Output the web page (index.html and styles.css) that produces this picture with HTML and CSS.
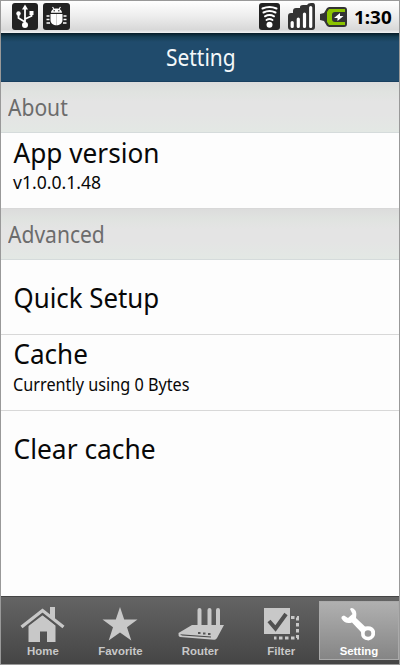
FILE: index.html
```html
<!DOCTYPE html>
<html lang="en">
<head>
<meta charset="utf-8">
<title>Setting</title>
<link rel="stylesheet" href="styles.css">
</head>
<body>
<div class="phone">
  <header class="status">
    <svg class="usb" width="26" height="27" viewBox="0 0 26 27"><rect width="26" height="27" rx="3" fill="#222"/><g fill="none" stroke="#fff" stroke-width="1.8"><path d="M13 5v17M13 19L6.500 15V11M13 16l6.500-3V10"/></g><path d="M13 1.500l3 5h-6z" fill="#fff"/><circle cx="13" cy="22" r="3" fill="#fff"/><circle cx="6.500" cy="10.500" r="2.200" fill="#fff"/><rect x="17.500" y="8" width="4" height="4" fill="#fff"/></svg>
    <svg class="bug" width="27" height="27" viewBox="0 0 27 27"><rect width="27" height="27" rx="3" fill="#222"/><path d="M8 9.800C8 4 19 4 19 9.800zM7.500 11h12v6c0 7-12 7-12 0z" fill="#fff"/><path d="M9.500 4l1.500 2M17.500 4L16 6" stroke="#fff" stroke-width="1.200"/><path d="M3.500 13h3M3.500 16.500h3M3.500 20h3.500M20.500 13h3M20.500 16.500h3M20 20h3.500" stroke="#fff" stroke-width="1.700"/><path d="M13.500 11v11" stroke="#ccc"/><path d="M10.500 7.800h1.500M15 7.800h1.500" stroke="#222"/></svg>
    <svg class="wifi" width="21" height="27" viewBox="0 0 21 27"><rect width="21" height="27" rx="3" fill="#222"/><g fill="none" stroke="#fff" stroke-width="2" stroke-linecap="round"><path d="M3.500 5.500Q10.500 2.500 17.500 5.500M4.500 9.500Q10.500 6.500 16.500 9.500M6 13.300Q10.500 10.800 15 13.300M7.500 17Q10.500 15 13.500 17"/></g><circle cx="10.500" cy="21.800" r="3" fill="#fff"/></svg>
    <svg class="signal" width="27" height="27" viewBox="0 0 27 27"><path d="M0 24V13Q0 10 3 10H5V8Q5 5 8 5H12V4Q12 2 15 2H19Q20 0 23 0H25Q27 0 27 3V24Q27 27 24 27H3Q0 27 0 24z" fill="#333"/><path d="M4.200 23.500v-4M10.300 23.500V16M16.500 23.500V11M22.700 23.500V4.500" stroke="#fff" stroke-width="3.200" stroke-linecap="round"/></svg>
    <svg class="battery" width="27" height="20" viewBox="0 0 27 20"><path d="M0 7l4-1 3-5 2-1h15q3 0 3 3v14q0 3-3 3H9l-2-1-3-5-4-1z" fill="#333"/><path d="M9 2h16v3H15q-3 0-3 3v4q0 3 3 3h10v3H9l-2-3V5z" fill="#8bc400"/><path d="M14 11l6-5v3h3.500l-6 5v-3z" fill="#fff"/></svg>
    <span class="clock">1:30</span>
  </header>
  <div class="titlebar"><span class="t-title">Setting</span></div>
  <main>
    <h2 class="about"><span class="t-about">About</span></h2>
    <section class="row"><span class="t-main t-app">App version</span><span class="t-sub t-ver">v1.0.0.1.48</span></section>
    <h2><span class="t-adv">Advanced</span></h2>
    <section class="row single"><span class="t-main t-quick">Quick Setup</span></section>
    <section class="row"><span class="t-main t-cache">Cache</span><span class="t-sub t-use">Currently using 0 Bytes</span></section>
    <section class="row single last"><span class="t-main t-clear">Clear cache</span></section>
  </main>
  <nav>
    <div class="tab"><svg width="46" height="36" viewBox="0 0 46 36"><path d="M30 1h5v13l-5-4zM8.500 19.500L22 8.500l13.500 11V36H27V25.500h-7V36H8.500z"/><path d="M1.500 22.500L22.500 6.500l21 16" fill="none" stroke="#555" stroke-width="4.500"/><path d="M1.500 21L22.500 4.500l21 16.500" fill="none" stroke="#c8c8c8" stroke-width="3.300"/></svg><span>Home</span></div>
    <div class="tab"><svg width="36" height="36" viewBox="0 0 36 36"><path d="M18 1l4.200 12.500H35.500L25 21.300 29.300 34.500 18 26.500 6.700 34.500 11 21.300.5 13.500h13.300z"/></svg><span>Favorite</span></div>
    <div class="tab"><svg width="48" height="36" viewBox="0 0 48 36"><path d="M15 19h32l-7 13q-1 2-3 1.700L3 31q-2-1-1.500-4z"/><path d="M22.500 21V4M32.500 21V4M41 21V4" stroke="#c8c8c8" stroke-width="4" stroke-linecap="round"/><path d="M3 28.200l31 2.300v1L5 29.500z" fill="#484848"/><path d="M21 27h2.500M26 27.500h2.500M31 28h2.500" stroke="#555" stroke-width="1.800"/></svg><span>Router</span></div>
    <div class="tab"><svg width="36" height="36" viewBox="0 0 36 36"><path d="M0 2h26v26H0z"/><path d="M5 15l6.500 7.500L22 8" fill="none" stroke="#505050" stroke-width="4"/><path d="M27 11.500h6.500V32H10" fill="none" stroke="#c8c8c8" stroke-width="3" stroke-dasharray="3.500 2.500"/></svg><span>Filter</span></div>
    <div class="tab active"><svg width="36" height="36" viewBox="0 0 36 36"><path d="M9 3Q11 .5 14 4Q16 6 15 12L24 20.500Q32 19 34 25Q35 33 27.500 34.500Q19.500 34 20 26L11 16.500Q4 18.500.5 12.500Q0 10 3 9.500L7 12 11.500 8z" fill="#fff"/><circle cx="27" cy="27.500" r="3.300" fill="#999"/></svg><span>Setting</span></div>
  </nav>
</div>
</body>
</html>
```
FILE: styles.css
```css
* { box-sizing: border-box; }
body { margin: 0; font-family: "Noto Sans", sans-serif; }
.phone { width: 400px; height: 665px; border: 1px solid #999; background: #fdfdfd; display: flex; flex-direction: column; overflow: hidden; }
span { display: inline-block; white-space: nowrap; transform-origin: left center; }
.status { height: 32px; flex: none; display: flex; align-items: flex-start; padding: 2px 0 0 11px; background: linear-gradient(#fff, #eee 45%, #d8d8d8 90%, #f4f4f4); }
.bug { margin-left: 5px; }
.wifi { margin-left: auto; }
.signal { margin-left: 8px; }
.battery { margin: 4px 0 0 5px; }
.clock { width: 45px; font-size: 18.5px; line-height: 26px; margin: 1px 0 0 7px; font-weight: 700; transform: scaleX(1.02); }
.titlebar { height: 49px; flex: none; background: linear-gradient(#071c27, #173f55 4px, #204b6c 9px, #204b6c); border-bottom: 1px solid #193f5f; color: #f4f8fa; padding-left: 165px; }
.t-title { font-size: 23px; line-height: 48px; transform: scaleX(.91); }
h2 { margin: 0; height: 51px; flex: none; padding-left: 7px; font-weight: 400; font-size: 23px; line-height: 50px; color: #6c6c6c; background: linear-gradient(#dcdcdc, #e0e3e0 10px, #e4e4e4 20px, #e4e4e4 32px, #e3e8e4); border-bottom: 1px solid #d5dbdb; }
.about { line-height: 51px; }
.row { height: 76px; padding: 1px 0 0 12px; border-bottom: 1px solid #d8d8d8; display: flex; flex-direction: column; align-items: flex-start; color: #080808; }
.single { padding-top: 19px; height: 75px; }
.last { border: 0; }
.t-main { font-size: 27px; line-height: 38px; }
.t-sub { font-size: 17.5px; line-height: 22px; }
.t-about, .t-adv { transform: scaleX(.915); }
.t-app { transform: translateX(.5px) scaleX(.97); }
.t-quick { transform: translateX(.5px) scaleX(.957); }
.t-cache { transform: translate(.5px, -1px) scaleX(.965); }
.t-clear { transform: translateX(.5px) scaleX(.977); }
.t-ver { transform: translateY(-1px) scaleX(1.005); }
.t-use { transform: translateY(-1px) scaleX(.928); }
nav { margin-top: auto; height: 68px; flex: none; display: grid; grid-template-columns: 83px 72px 89px 73px 81px; border-top: 1px solid #444; background: linear-gradient(#646464, #454545); }
.tab { display: flex; flex-direction: column; align-items: center; padding-top: 9px; color: #c8c8c8; fill: #c8c8c8; }
.tab svg { display: block; flex: none; }
.tab span { font: 700 10px/14px "Liberation Sans", sans-serif; transform-origin: center; margin-top: 3px; transform: scaleX(1.14); }
.active { margin: 4px 0 0 1px; padding-top: 4px; height: 59px; background: linear-gradient(#b0b0b0, #858585); border: 1px solid #aaa; color: #fff; }
```
